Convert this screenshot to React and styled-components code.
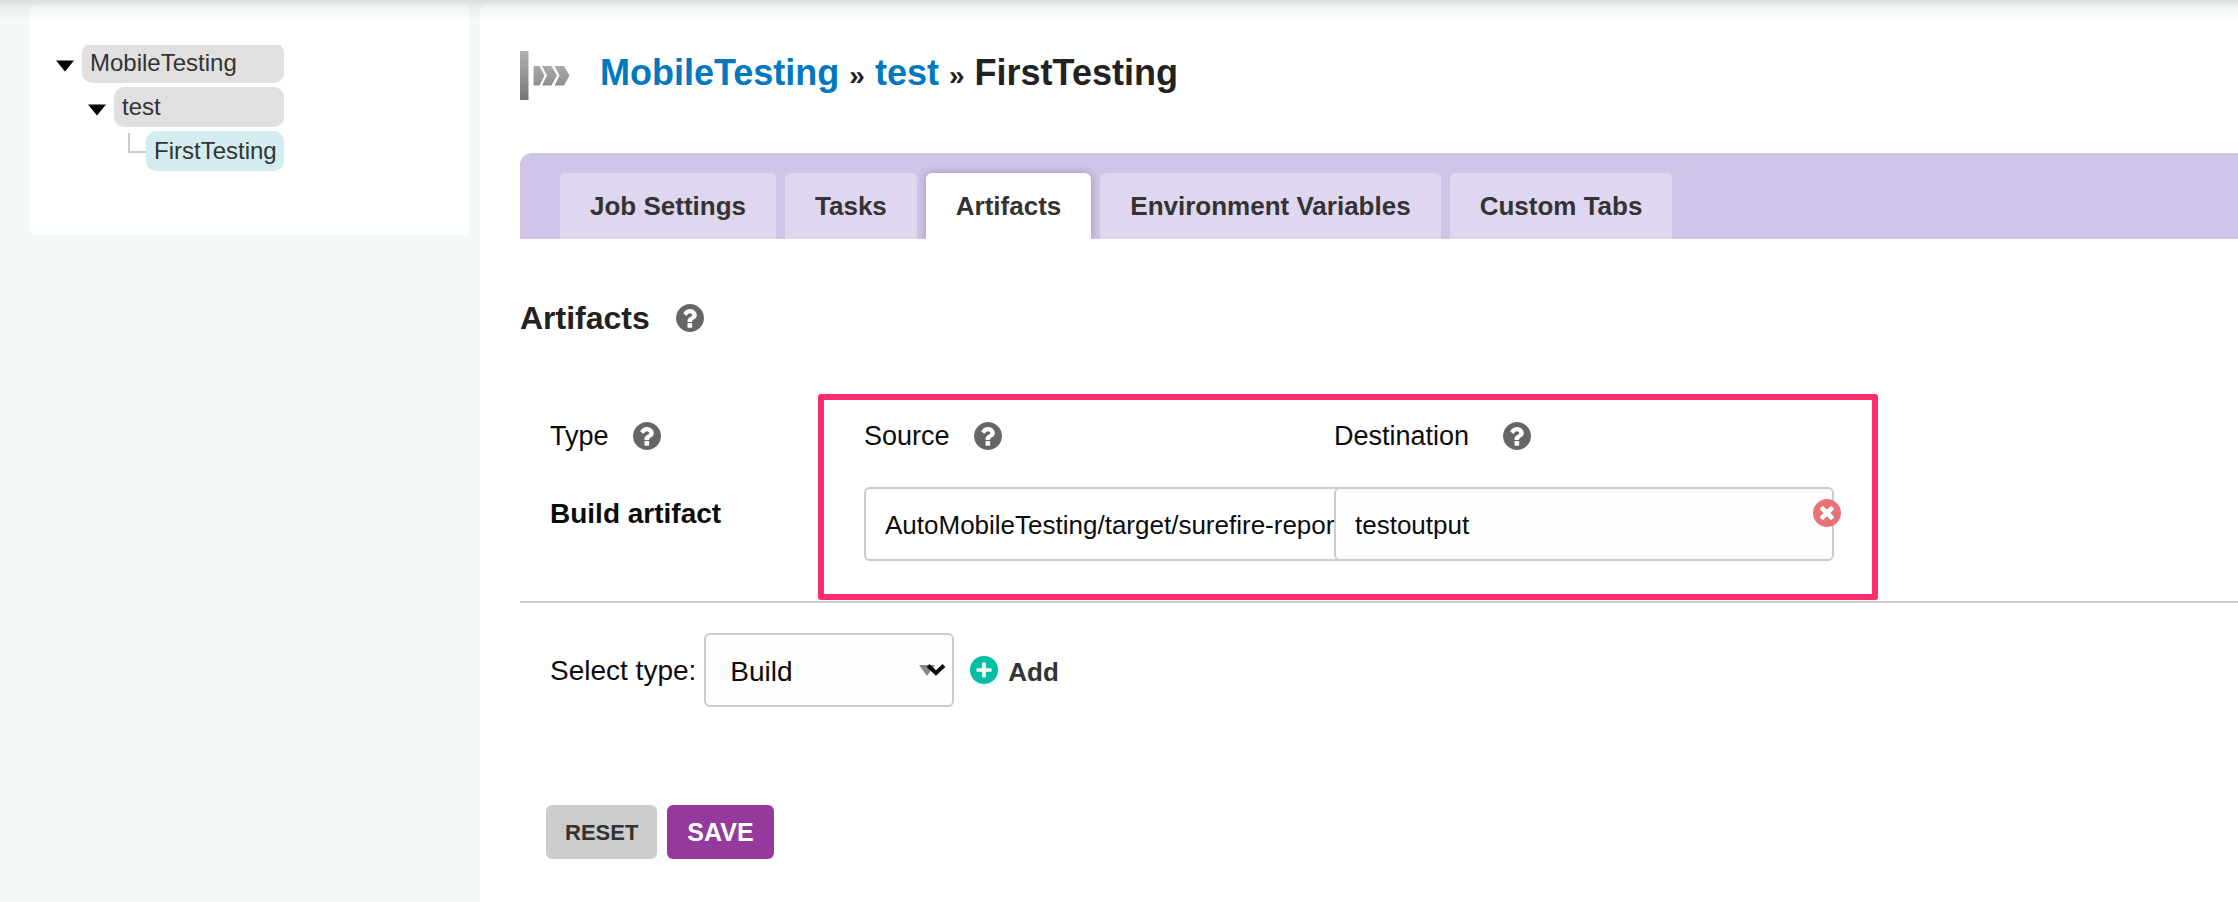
import React, { useState } from "react";
import styled, { createGlobalStyle, css } from "styled-components";

const GlobalStyle = createGlobalStyle`
  *, *::before, *::after { box-sizing: border-box; }
  body {
    margin: 0;
    background: #f4f8f9;
    color: #0c0c0c;
    font-family: "Liberation Sans", Arial, Helvetica, sans-serif;
    font-size: 26px;
  }
  input, select, button { font: inherit; color: inherit; }
`;

const Page = styled.div`
  position: relative;
  display: flex;
  gap: 10px;
  min-height: 100vh;
  padding: 5px 0 0 30px;
  overflow: hidden;
`;

/* Shadow cast by the site header onto the content below it. */
const HeaderShadow = styled.div`
  position: absolute;
  top: 0;
  left: 0;
  right: 0;
  height: 20px;
  z-index: 5;
  pointer-events: none;
  background: linear-gradient(rgba(0, 0, 0, 0.1), rgba(0, 0, 0, 0.05) 30%, rgba(0, 0, 0, 0));
`;

const SidePanel = styled.aside`
  flex: 0 0 440px;
  align-self: flex-start;
  padding: 40px 26px 64px;
  border-radius: 6px;
  background: #fff;
`;

const Tree = styled.nav`
  width: 228px;
  overflow: hidden;
`;

const Branch = styled.ul`
  list-style: none;
  padding: 0;
  margin: ${(p) => (p.$root ? "-2px 0 0" : "4px 0 0 32px")};
`;

const TreeRow = styled.div`
  display: flex;
  height: 40px;
`;

const Toggle = styled.button`
  flex: none;
  width: 18px;
  height: 40px;
  margin-right: 8px;
  padding: 0;
  border: 0;
  background: none;
  cursor: pointer;
  svg { display: block; }
`;

const TreeLink = styled.a`
  flex: 1;
  min-width: 0;
  padding-left: 8px;
  border-radius: 10px;
  background: ${(p) => (p.$current ? "#d3ecef" : "#e0e0e0")};
  color: #333;
  font-size: 24px;
  line-height: 40px;
  white-space: nowrap;
  text-decoration: none;
`;

const Main = styled.main`
  flex: 1;
  min-width: 0;
  padding: 46px 0 40px 40px;
  border-top-left-radius: 6px;
  background: #fff;
`;

const PageHeader = styled.header`
  display: flex;
  align-items: flex-start;
  gap: 30px;
  height: 50px;
`;

const Title = styled.h1`
  margin: 0;
  color: #222;
  font-size: 36px;
  line-height: 44px;
`;

const Crumb = styled.a`
  color: #0079bf;
  text-decoration: none;
`;

const Separator = styled.span`
  font-size: 28px;
`;

const TabBar = styled.nav`
  display: flex;
  gap: 9px;
  margin-top: 52px;
  padding: 20px 0 0 40px;
  border-top-left-radius: 12px;
  background: #d0c4e8;
  overflow: hidden;
`;

const Tab = styled.a`
  padding: 0 30px;
  border-radius: 6px 6px 0 0;
  background: #dfd7ef;
  color: #333;
  font-weight: bold;
  line-height: 66px;
  text-decoration: none;
  ${(p) =>
    p.$active &&
    css`
      background: #fff;
      box-shadow: 0 0 10px rgba(0, 0, 0, 0.25);
    `}
`;

const SectionHead = styled.div`
  display: flex;
  align-items: center;
  gap: 26px;
  margin-top: 59px;
`;

const SectionTitle = styled.h2`
  margin: 0;
  color: #222;
  font-size: 32px;
  line-height: 40px;
`;

const HelpButton = styled.button`
  display: block;
  padding: 0;
  border: 0;
  background: none;
  color: #666;
  cursor: help;
  svg { display: block; }
`;

const TableArea = styled.div`
  position: relative;
  margin-top: 77px;
  border-bottom: 2px solid #ccc;
`;

const Highlight = styled.div`
  position: absolute;
  z-index: 3;
  top: -21px;
  bottom: 1px;
  left: 298px;
  width: 1060px;
  border: 6px solid #ff2d6c;
  border-radius: 3px;
  pointer-events: none;
`;

const ArtifactTable = styled.table`
  width: 100%;
  table-layout: fixed;
  border-collapse: collapse;
`;

const HeadCell = styled.th`
  width: ${(p) => p.$width || "auto"};
  height: 72px;
  padding: ${(p) => (p.$first ? "0 0 0 30px" : "0")};
  font-size: 27px;
  font-weight: normal;
  text-align: left;
  vertical-align: top;
`;

const HeadContent = styled.div`
  display: flex;
  align-items: center;
  gap: ${(p) => (p.$wide ? "34px" : "24px")};
  line-height: 42px;
`;

const TypeCell = styled.th`
  height: 114px;
  padding: 0 0 0 30px;
  font-size: 28px;
  line-height: 54px;
  text-align: left;
  vertical-align: top;
`;

const Cell = styled.td`
  padding: 0;
  vertical-align: top;
`;

const TextInput = styled.input`
  display: block;
  width: 100%;
  height: 74px;
  padding: 2px 19px 0;
  border: 2px solid #ccc;
  border-radius: 6px;
  background: #fefefe;
`;

const SourceInput = styled(TextInput)`
  position: relative;
  z-index: 1;
  width: 480px;
  padding-right: 0;
  border-right: 0;
  border-radius: 6px 0 0 6px;
  background: none;
`;

const DestinationField = styled.div`
  position: relative;
  width: 500px;
`;

const RemoveButton = styled.button`
  position: absolute;
  top: 12px;
  right: -7px;
  padding: 0;
  border: 0;
  background: none;
  color: #e57373;
  cursor: pointer;
  svg { display: block; }
`;

const AddRow = styled.div`
  display: flex;
  align-items: center;
  gap: 16px;
  padding: 30px 0 0 30px;
`;

const TypeLabel = styled.label`
  display: flex;
  align-items: center;
  gap: 8px;
  font-size: 28px;
`;

const LabelText = styled.span`
  padding-top: 2px;
`;

const SelectBox = styled.span`
  position: relative;
  width: 250px;
  svg {
    position: absolute;
    top: 30px;
    right: 8px;
    pointer-events: none;
  }
`;

const Select = styled.select`
  display: block;
  width: 100%;
  height: 74px;
  padding: 2px 40px 0 24px;
  border: 2px solid #ccc;
  border-radius: 6px;
  background: #fefefe;
  appearance: none;
`;

const AddButton = styled.button`
  display: flex;
  align-items: center;
  gap: 10px;
  padding: 0;
  border: 0;
  background: none;
  color: #333;
  font-weight: bold;
  cursor: pointer;
`;

const AddLabel = styled.span`
  padding-top: 4px;
`;

const Actions = styled.div`
  display: flex;
  gap: 10px;
  margin-top: 98px;
  padding-left: 26px;
`;

const ActionButton = styled.button`
  height: 54px;
  padding: ${(p) => (p.$primary ? "0 20px" : "2px 19px 0")};
  border: 0;
  border-radius: 6px;
  background: ${(p) => (p.$primary ? "#943a9d" : "#ccc")};
  color: ${(p) => (p.$primary ? "#fff" : "#333")};
  font-size: ${(p) => (p.$primary ? "25px" : "22px")};
  font-weight: bold;
  cursor: pointer;
`;

const Caret = () => (
  <svg width="18" height="40" viewBox="0 0 18 40" aria-hidden="true">
    <path d="M0 17.500h18l-9 11z" fill="#000" />
  </svg>
);

const Connector = () => (
  <svg width="26" height="40" viewBox="0 0 26 40" aria-hidden="true">
    <path d="M9 2v19h17" fill="none" stroke="#ccc" strokeWidth="2" />
  </svg>
);

const JobLogo = () => (
  <svg width="50" height="50" viewBox="0 0 50 50" aria-hidden="true">
    <defs>
      <linearGradient id="bar" x1="0" y1="0" x2="0" y2="1">
        <stop offset="0" stopColor="#b2b2b2" />
        <stop offset="1" stopColor="#757575" />
      </linearGradient>
      <linearGradient id="arrow" x1="0" y1="0" x2="0" y2="1">
        <stop offset="0" stopColor="#ababab" />
        <stop offset="1" stopColor="#8f8f8f" />
      </linearGradient>
    </defs>
    <rect width="8.500" height="49" fill="url(#bar)" />
    <path d="M13.500 15h6l5 9.500-5 10h-6z" fill="url(#arrow)" />
    <path d="M22 15h9.500l5.500 9.500-5.500 10h-9.500l5-10z" fill="url(#arrow)" />
    <path d="M34.500 15h9.500l5.500 9.500-5.500 10h-9.500l5-10z" fill="url(#arrow)" />
  </svg>
);

const DISC =
  "M1664 896q0 209-103 385.500t-279.500 279.500-385.500 103-385.500-103-279.500-279.500-103-385.500 103-385.500 279.500-279.500 385.500-103 385.500 103 279.500 279.500 103 385.500z";

const QuestionIcon = () => (
  <svg width="28" height="28" viewBox="128 128 1536 1536" aria-hidden="true">
    <path d={DISC} fill="currentColor" />
    <path
      fill="#fff"
      transform="translate(-10 24)"
      d="M1024 1376v-192q0-14-9-23t-23-9h-192q-14 0-23 9t-9 23v192q0 14 9 23t23 9h192q14 0 23-9t9-23zm256-672q0-88-55.500-163t-138.500-116-170-41q-243 0-371 213-15 24 8 42l132 100q7 6 19 6 16 0 25-12 53-68 86-92 34-24 86-24 48 0 85.500 26t37.500 59q0 38-20 61t-68 45q-63 28-115.500 86.500t-52.500 125.500v36q0 14 9 23t23 9h192q14 0 23-9t9-23q0-19 21.500-49.500t54.500-49.500q32-18 49-28.500t46-35 44.500-48 28-60.500 12.500-81z"
    />
  </svg>
);

const RemoveIcon = () => (
  <svg width="28" height="28" viewBox="128 128 1536 1536" aria-hidden="true">
    <path d={DISC} fill="currentColor" />
    <path
      fill="#fff"
      d="M1277 1122q0-26-19-45l-181-181 181-181q19-19 19-45 0-27-19-46l-90-90q-19-18-46-18-26 0-45 18l-181 181-181-181q-19-18-45-18-27 0-46 18l-90 90q-18 19-18 46 0 26 18 45l181 181-181 181q-18 19-18 45 0 27 18 46l90 90q19 18 46 18 26 0 45-18l181-181 181 181q19 18 45 18 27 0 46-18l90-90q19-19 19-46z"
    />
  </svg>
);

const PlusIcon = () => (
  <svg width="28" height="28" viewBox="0 0 28 28" aria-hidden="true">
    <circle cx="14" cy="14" r="14" fill="#00bfa5" />
    <path d="M14 6.500v15M6.500 14h15" stroke="#fff" strokeWidth="3.600" />
  </svg>
);

const SelectArrows = () => (
  <svg width="28" height="14" viewBox="0 0 28 14" aria-hidden="true">
    <path d="M1 2h16l-8 11z" fill="#888" />
    <path d="M10 2.500l8 7.500 8-7.500" fill="none" stroke="#0a0a0a" strokeWidth="4" />
  </svg>
);

const Help = ({ topic }) => (
  <HelpButton type="button" aria-label={`Help: ${topic}`}>
    <QuestionIcon />
  </HelpButton>
);

const TABS = ["Job Settings", "Tasks", "Artifacts", "Environment Variables", "Custom Tabs"];

export default function App() {
  const [source, setSource] = useState("AutoMobileTesting/target/surefire-repor");
  const [destination, setDestination] = useState("testoutput");

  return (
    <Page>
      <GlobalStyle />
      <HeaderShadow />
      <SidePanel>
        <Tree aria-label="Pipeline structure">
          <Branch $root>
            <li>
              <TreeRow>
                <Toggle type="button" aria-label="Collapse MobileTesting">
                  <Caret />
                </Toggle>
                <TreeLink href="#pipeline">MobileTesting</TreeLink>
              </TreeRow>
              <Branch>
                <li>
                  <TreeRow>
                    <Toggle type="button" aria-label="Collapse test">
                      <Caret />
                    </Toggle>
                    <TreeLink href="#stage">test</TreeLink>
                  </TreeRow>
                  <Branch>
                    <li>
                      <TreeRow>
                        <Connector />
                        <TreeLink href="#job" $current aria-current="page">
                          FirstTesting
                        </TreeLink>
                      </TreeRow>
                    </li>
                  </Branch>
                </li>
              </Branch>
            </li>
          </Branch>
        </Tree>
      </SidePanel>

      <Main>
        <PageHeader>
          <JobLogo />
          <Title>
            <Crumb href="#pipeline">MobileTesting</Crumb> <Separator>»</Separator>{" "}
            <Crumb href="#stage">test</Crumb> <Separator>»</Separator> FirstTesting
          </Title>
        </PageHeader>

        <TabBar aria-label="Job configuration">
          {TABS.map((name) => (
            <Tab key={name} href="#tab" $active={name === "Artifacts"}>
              {name}
            </Tab>
          ))}
        </TabBar>

        <SectionHead>
          <SectionTitle>Artifacts</SectionTitle>
          <Help topic="Artifacts" />
        </SectionHead>

        <form onSubmit={(e) => e.preventDefault()}>
          <TableArea>
            <ArtifactTable>
              <thead>
                <tr>
                  <HeadCell $width="344px" $first scope="col">
                    <HeadContent>
                      Type <Help topic="Type" />
                    </HeadContent>
                  </HeadCell>
                  <HeadCell $width="470px" scope="col">
                    <HeadContent>
                      <label htmlFor="source">Source</label> <Help topic="Source" />
                    </HeadContent>
                  </HeadCell>
                  <HeadCell scope="col">
                    <HeadContent $wide>
                      <label htmlFor="destination">Destination</label> <Help topic="Destination" />
                    </HeadContent>
                  </HeadCell>
                </tr>
              </thead>
              <tbody>
                <tr>
                  <TypeCell scope="row">Build artifact</TypeCell>
                  <Cell>
                    <SourceInput
                      id="source"
                      type="text"
                      value={source}
                      onChange={(e) => setSource(e.target.value)}
                    />
                  </Cell>
                  <Cell>
                    <DestinationField>
                      <TextInput
                        id="destination"
                        type="text"
                        value={destination}
                        onChange={(e) => setDestination(e.target.value)}
                      />
                      <RemoveButton type="button" aria-label="Remove artifact">
                        <RemoveIcon />
                      </RemoveButton>
                    </DestinationField>
                  </Cell>
                </tr>
              </tbody>
            </ArtifactTable>
            <Highlight />
          </TableArea>

          <AddRow>
            <TypeLabel>
              <LabelText>Select type:</LabelText>
              <SelectBox>
                <Select defaultValue="Build">
                  <option>Build</option>
                </Select>
                <SelectArrows />
              </SelectBox>
            </TypeLabel>
            <AddButton type="button">
              <PlusIcon />
              <AddLabel>Add</AddLabel>
            </AddButton>
          </AddRow>

          <Actions>
            <ActionButton type="reset">RESET</ActionButton>
            <ActionButton type="submit" $primary>
              SAVE
            </ActionButton>
          </Actions>
        </form>
      </Main>
    </Page>
  );
}
